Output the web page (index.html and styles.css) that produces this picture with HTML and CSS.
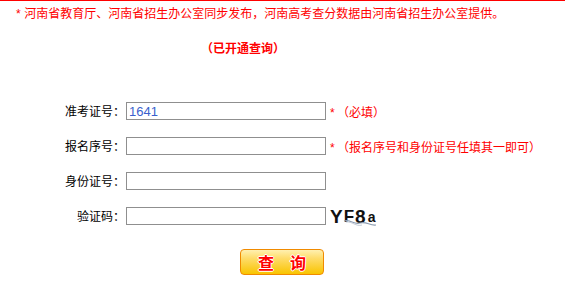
FILE: index.html
```html
<!DOCTYPE html>
<html lang="zh-CN">
<head>
<meta charset="utf-8">
<title>河南高考查分</title>
<link rel="stylesheet" href="styles.css">
</head>
<body>
<div class="page">
  <p class="notice"><span class="star">*</span> 河南省教育厅、河南省招生办公室同步发布，河南高考查分数据由河南省招生办公室提供。</p>
  <p class="status">（已开通查询）</p>
  <div class="form">
    <label class="label">准考证号：</label>
    <div class="field"><input class="input" type="text" value="1641"><span class="star">*</span><span class="hint">（必填）</span></div>
    <label class="label">报名序号：</label>
    <div class="field"><input class="input" type="text"><span class="star">*</span><span class="hint">（报名序号和身份证号任填其一即可）</span></div>
    <label class="label">身份证号：</label>
    <div class="field"><input class="input" type="text"></div>
    <label class="label">验证码：</label>
    <div class="field"><input class="input" type="text">
      <span class="captcha"><span class="c1">Y</span><span class="c2">F</span><span class="c3">8</span><span class="c4">a</span>
        <svg class="noise" width="48" height="20" viewBox="0 0 48 20"><path d="M14 13 C20 11 24 17 30 15 S40 18 46 17" fill="none" stroke="#8a9bb0" stroke-width="1.2"/><path d="M16 14 C22 13 26 19 32 17" fill="none" stroke="#c4ccd8" stroke-width="1"/></svg>
      </span>
    </div>
  </div>
  <div class="actions"><button class="btn" type="button">查　询</button></div>
</div>
</body>
</html>
```
FILE: styles.css
```css
html, body {
  margin: 0;
  padding: 0;
  background: #fff;
}
.page {
  width: 565px;
  height: 280px;
  border-top: 1px solid #ff0000;
  font-family: "Noto Sans CJK SC", "Liberation Sans", sans-serif;
  font-size: 12px;
  color: #000;
}
.notice {
  margin: 4px 0 0 16px;
  line-height: 16px;
  color: #ff0000;
  font-size: 12px;
}
.star {
  color: #ff0000;
  font-family: "Liberation Sans", sans-serif;
  font-size: 12px;
}
.notice .star {
  margin-right: 1px;
}
.status {
  margin: 18px 0 0 201px;
  line-height: 16px;
  color: #ff0000;
  font-weight: bold;
}
.form {
  margin-top: 46px;
  display: grid;
  grid-template-columns: 126px auto;
  row-gap: 17px;
  align-items: center;
}
.label {
  text-align: right;
  padding-right: 1px;
  line-height: 18px;
}
.field {
  display: flex;
  align-items: center;
  height: 18px;
}
.input {
  box-sizing: border-box;
  width: 200px;
  height: 18px;
  margin: 0;
  padding: 0 2px;
  border: 1px solid #8f8f8f;
  font-family: "Liberation Sans", sans-serif;
  font-size: 13px;
  color: #3a5fcd;
  outline: none;
}
.field .star {
  margin-left: 4px;
  width: 6px;
  line-height: 12px;
  padding-top: 4px;
}
.hint {
  color: #ff0000;
  margin-left: 1px;
}
.captcha {
  position: relative;
  margin-left: 4px;
  width: 48px;
  height: 20px;
  display: flex;
  align-items: flex-end;
  font-family: "Liberation Sans", sans-serif;
  font-weight: bold;
  color: #111;
  line-height: 18px;
}
.c1, .c3 {
  font-size: 19px;
}
.c2 {
  font-size: 17px;
  margin-left: 1px;
}
.c3 {
  margin-left: 1px;
}
.c4 {
  font-size: 14px;
  margin-left: 2px;
}
.noise {
  position: absolute;
  left: 0;
  top: 2px;
}
.actions {
  margin: 24px 0 0 240px;
}
.btn {
  box-sizing: border-box;
  width: 84px;
  height: 26px;
  margin: 0;
  padding: 0;
  border: 1px solid #f08a00;
  border-radius: 4px;
  background: linear-gradient(#fff0b0 0%, #fedc6a 35%, #f9c400 100%);
  font-family: "Noto Sans CJK SC", sans-serif;
  font-size: 16px;
  font-weight: bold;
  color: #ff0000;
  line-height: 22px;
  text-shadow: 1px 0 0 #fff, -1px 0 0 #fff, 0 1px 0 #fff, 0 -1px 0 #fff;
}
```
